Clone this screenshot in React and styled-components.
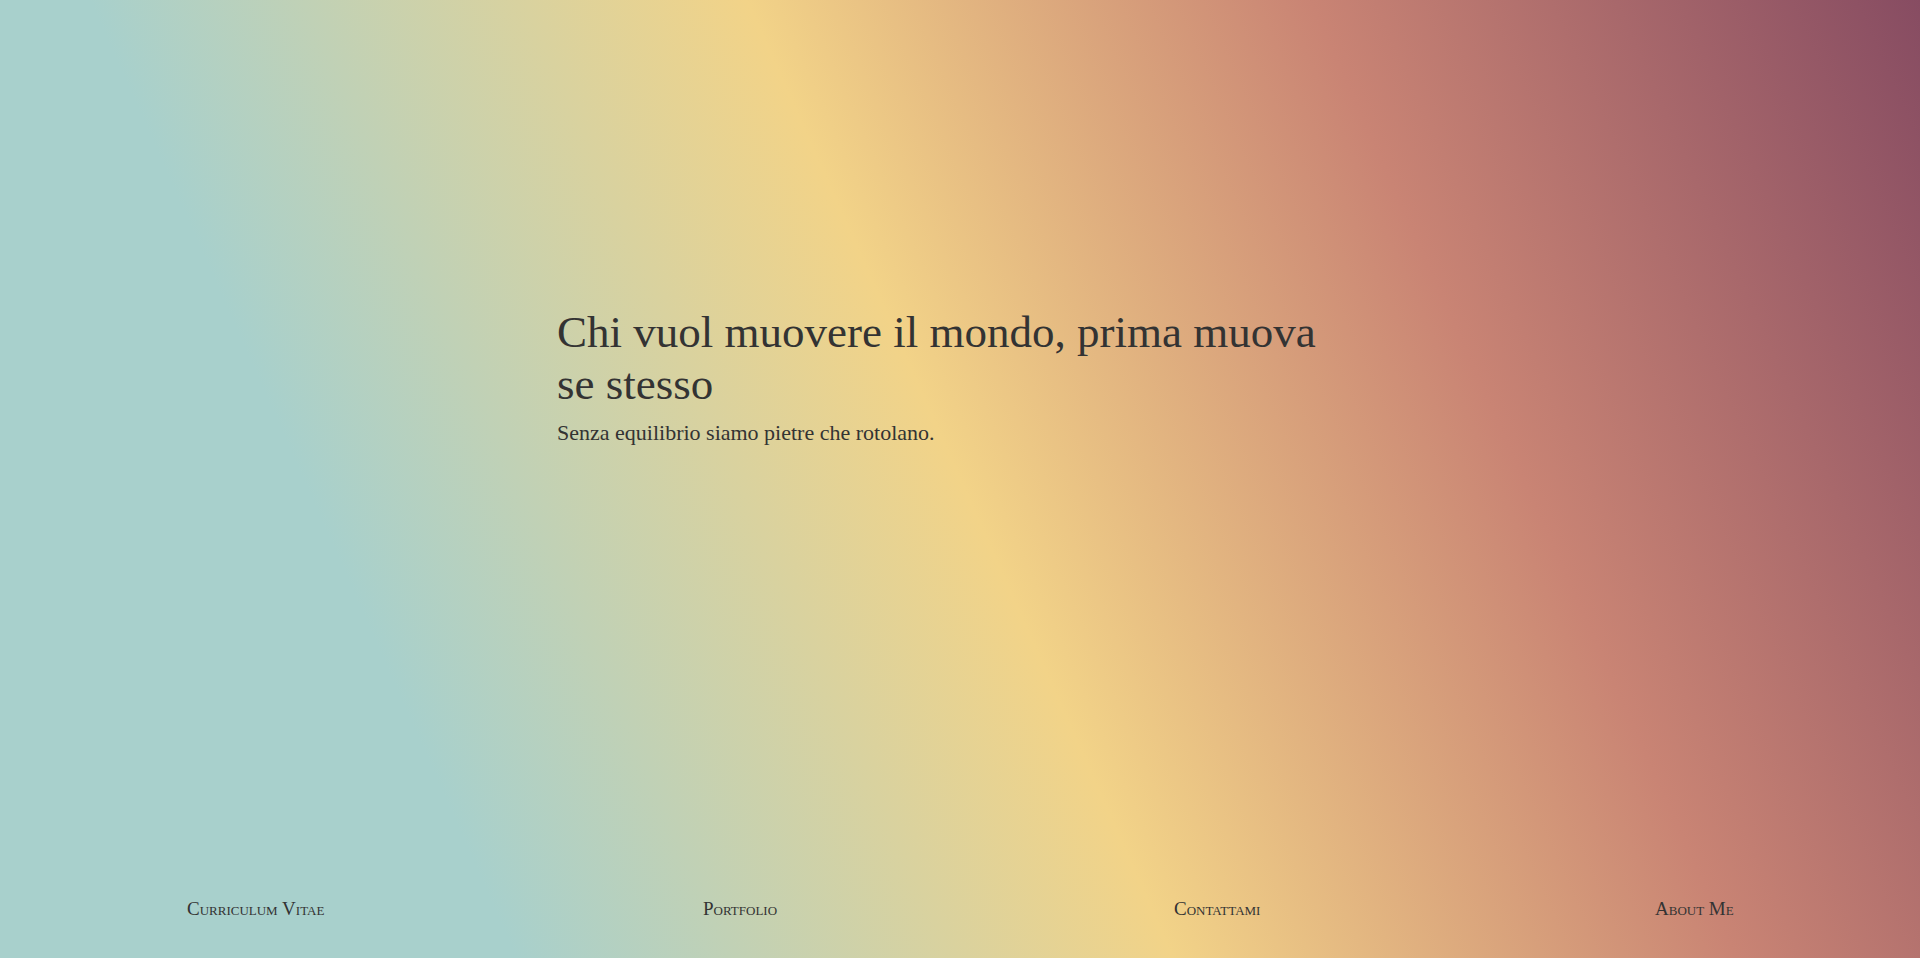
import React from 'react'
import styled, { createGlobalStyle } from 'styled-components'

const GlobalStyle = createGlobalStyle`
    html, body {
        margin: 0;
        padding: 0;
    }

    body {
        min-height: 100vh;
        font-family: "Liberation Serif", "Times New Roman", serif;
        color: #333333;
        background: linear-gradient(66deg, #a8d0cc 22%, #f2d388 50%, #c98474 74%, #874c62 100%);
        background-attachment: fixed;
    }
`

const links = ['Curriculum Vitae', 'Portfolio', 'Contattami', 'About Me']

const App = () => {
    return (
        <>
            <GlobalStyle />
            <Page>
                <Hero>
                    <Intro>
                        <Title>Chi vuol muovere il mondo, prima muova se stesso</Title>
                        <Subtitle>Senza equilibrio siamo pietre che rotolano.</Subtitle>
                    </Intro>
                </Hero>

                <Nav>
                    {links.map(label => (
                        <NavItem key={label}>
                            <NavLink href="#">{label}</NavLink>
                        </NavItem>
                    ))}
                </Nav>
            </Page>
        </>
    )
}

export default App

const Page = styled.div`
    display: flex;
    flex-direction: column;
    height: 100vh;
    overflow: hidden;
`

const Hero = styled.main`
    flex: 1;
    padding-top: 306px;
`

const Intro = styled.section`
    width: 806px;
    margin: 0 auto;
`

const Title = styled.h1`
    max-width: 785px;
    margin: 0;
    font-size: 45px;
    font-weight: normal;
    line-height: 52px;
    color: #333333;
`

const Subtitle = styled.p`
    margin: 10px 0 0;
    font-size: 22px;
    line-height: 25px;
    color: #333333;
`

const Nav = styled.ul`
    display: grid;
    grid-template-columns: 516px 471px 481px auto;
    list-style: none;
    margin: 0;
    padding: 0 0 39px 187px;
`

const NavItem = styled.li`
    display: flex;
`

const NavLink = styled.a`
    font-size: 19px;
    font-variant: small-caps;
    line-height: 20px;
    color: #333333;
    text-decoration: none;

    &:hover {
        color: #000000;
    }
`
